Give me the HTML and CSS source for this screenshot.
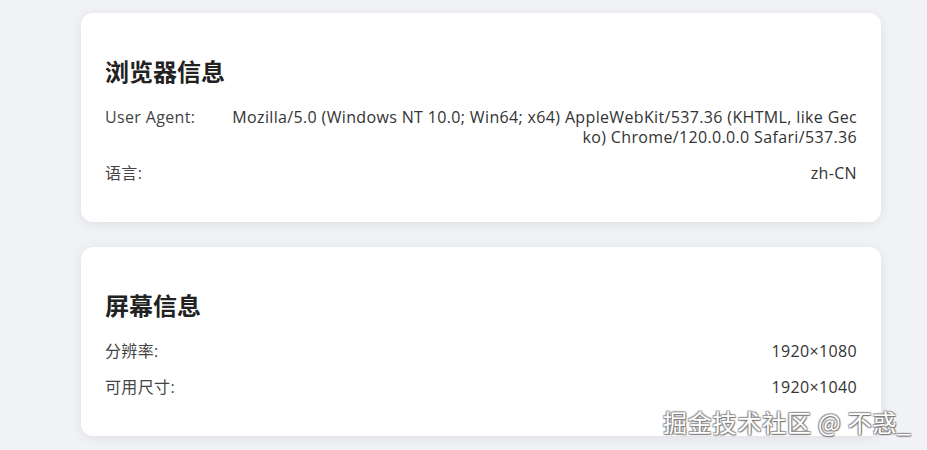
FILE: index.html
```html
<!DOCTYPE html>
<html lang="zh-CN">
<head>
<meta charset="utf-8">
<title>设备信息</title>
<link rel="stylesheet" href="styles.css">
</head>
<body>
<main class="page">
  <section class="card">
    <h2 class="card-title">浏览器信息</h2>
    <div class="row">
      <span class="label">User Agent:</span>
      <span class="value">Mozilla/5.0 (Windows NT 10.0; Win64; x64) AppleWebKit/537.36 (KHTML, like Gecko) Chrome/120.0.0.0 Safari/537.36</span>
    </div>
    <div class="row">
      <span class="label">语言:</span>
      <span class="value">zh-CN</span>
    </div>
  </section>
  <section class="card">
    <h2 class="card-title">屏幕信息</h2>
    <div class="row">
      <span class="label">分辨率:</span>
      <span class="value">1920×1080</span>
    </div>
    <div class="row">
      <span class="label">可用尺寸:</span>
      <span class="value">1920×1040</span>
    </div>
  </section>
</main>
<div class="watermark">掘金技术社区 @ 不惑_</div>
</body>
</html>
```
FILE: styles.css
```css
html, body {
  margin: 0;
  padding: 0;
  background: #f0f2f5;
  font-family: "Open Sans", "Noto Sans CJK SC", sans-serif;
  color: #333;
}
.page {
  display: flex;
  flex-direction: column;
  gap: 25px;
  padding: 13px 0 20px 81px;
}
.card {
  width: 800px;
  box-sizing: border-box;
  background: #fff;
  border-radius: 12px;
  box-shadow: 0 2px 12px rgba(0, 0, 0, 0.08);
  padding: 24px 24px 31px;
}
.card-title {
  margin: 18px 0 12px;
  font-size: 24px;
  line-height: 32px;
  font-weight: 700;
  color: #222;
  font-family: "Noto Sans CJK SC", sans-serif;
}
.row {
  display: flex;
  padding: 8px 0;
  font-size: 16px;
  line-height: 20px;
  letter-spacing: 0.35px;
}
.label {
  flex: 0 0 124px;
  color: #444;
}
.value {
  flex: 1;
  text-align: right;
  word-break: break-all;
  color: #333;
}
.watermark {
  position: absolute;
  left: 663px;
  top: 405px;
  font-family: "Noto Sans CJK SC", sans-serif;
  font-size: 24px;
  line-height: 34px;
  letter-spacing: 0.8px;
  color: #fff;
  text-shadow: 1px 1px 1px #777, -1px -1px 1px #999, 1px -1px 1px #999, -1px 1px 1px #999;
}
```
